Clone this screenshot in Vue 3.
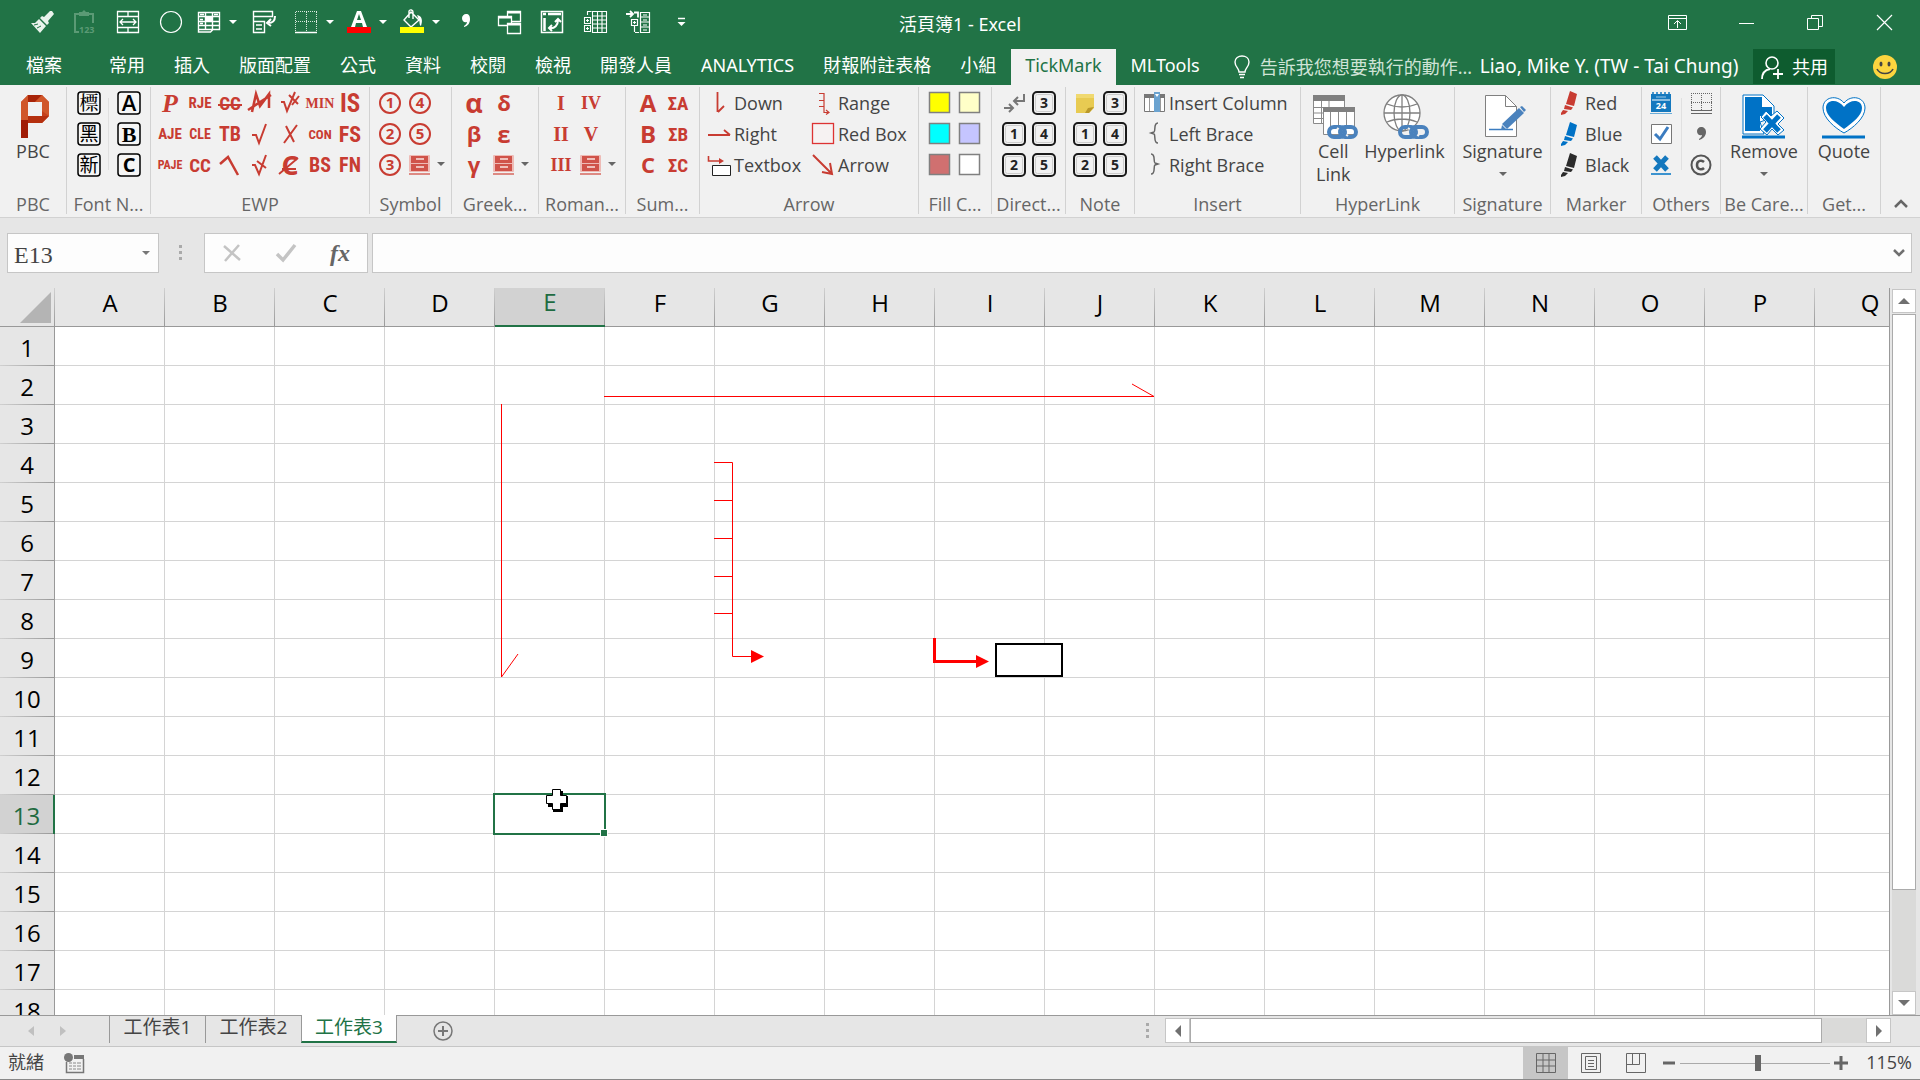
<script setup>
import { ref } from 'vue'

const RED = '#c83c32'
const BLUE = '#0072c6'
const NARROW = "'Liberation Sans Narrow','Roboto Condensed','DejaVu Sans Condensed',sans-serif"
const SANS = "'Open Sans','Noto Sans',sans-serif"
const SERIF = "'Liberation Serif',serif"

const glyph = (text, size, family = NARROW, extra = '', fill = RED) =>
  `<text x="12" y="${12 + Math.round(size * 0.36)}" text-anchor="middle" font-size="${size}" font-weight="700" font-family="${family}" fill="${fill}" ${extra}>${text}</text>`
const stroke = (d, width = 2, color = RED) =>
  `<path d="${d}" fill="none" stroke="${color}" stroke-width="${width}"/>`
const circled = (n) =>
  `<circle cx="12" cy="12" r="10" fill="none" stroke="${RED}" stroke-width="2"/>` + glyph(n, 15, SANS)
const boxed = (text, size, family, weight = 700) =>
  `<rect x="1" y="1" width="22" height="22" rx="3" fill="#f6f6f6" stroke="#000" stroke-width="1.5"/>` +
  glyph(text, size, family, '', '#000').replace('font-weight="700"', `font-weight="${weight}"`)
const keycap = (n) =>
  `<rect x="1" y="1" width="22" height="22" rx="4" fill="#f1f1f1" stroke="#1a1a1a" stroke-width="2"/><rect x="3.5" y="3.5" width="17" height="17" rx="2" fill="none" stroke="#ccc"/>` +
  glyph(n, 14, SANS, '', '#222')
const swatch = (color) =>
  `<rect x="1.5" y="1.5" width="20" height="20" fill="${color}" stroke="#808080" stroke-width="1.5"/>`
const marker = (color) =>
  `<path d="M12 0L19 3L16 15L8 13zM7 14L15 16.5L13 19L6 18zM5 19L10 20L7 23L3 24L3 22z" fill="${color}"/>`
const cabinet =
  `<rect x="1" y="2" width="21" height="17" rx="1" fill="#eebbb6"/><rect x="3" y="3" width="17" height="7" fill="#d0534a"/><rect x="3" y="11" width="17" height="7" fill="#d0534a"/><path d="M8 6h8M8 14h8" stroke="#efc0bb" stroke-width="2"/><path d="M1 21h21" stroke="#dd8a83" stroke-width="2"/>`
const chain =
  `<g fill="none" stroke="#4a82bd" stroke-width="4"><rect x="17" y="33" width="16" height="10" rx="5"/><rect x="28" y="33" width="16" height="10" rx="5"/></g><path d="M25 34l11 8" stroke="#f1f1f1" stroke-width="2"/><path d="M27 35l7 6" stroke="#4a82bd" stroke-width="3"/>`

const icons = {
  brush: '<path d="M22 1l2 3-6 7 1 2-2 2-7-7 2-2 2 1 6-6zM9 9l7 7-6 7-9-10 4 0z" fill="#e9f3ec"/><path d="M4 15l4-1M7 18l4-2" stroke="#217346"/>',
  paste: '<g fill="none" stroke="#5b9a75" stroke-width="2"><path d="M6 22H2V4h18v9"/></g><path d="M6 2h3l2-2 2 2h3v4H6z" fill="#5b9a75"/><text x="6" y="23" font-size="9" font-weight="700" font-family="Open Sans" fill="#5b9a75">123</text>',
  merge: '<path d="M1.5 1.5h21v21h-21zM1.500 6.500h21M1.500 17.500h21M12 1v5M12 18v5M4 12h16M7 9l-3 3 3 3M17 9l3 3-3 3" fill="none" stroke="#fff" stroke-width="1.3"/>',
  circle: '<circle cx="12" cy="12" r="10.5" fill="none" stroke="#fff" stroke-width="1.2"/>',
  table: '<path d="M1.500 2.500h21v17h-21zM1.500 6.500h21M1.500 11.500h21M1.500 15.500h21M8.500 2v17M15.500 2v17M3 4.500h4M17 4.500h4M3 9.500h3M3 13.500h3M1.500 19v3h12l3-3" fill="none" stroke="#fff" stroke-width="1.4"/><path d="M8 6h8v6H8z" fill="#fff"/>',
  form: '<path d="M1.500 1.500h19v5h-19zM1.500 11.500h11v11h-11zM1.500 6.500v5M4 15h6M4 19h6" fill="none" stroke="#fff" stroke-width="1.4"/><path d="M23 6c0 6-3 7-7 7M19 9l-4 4 4 3" fill="none" stroke="#fff" stroke-width="2"/>',
  borders: '<path d="M2 1.500h21M2 11.500h21M1.500 2v20M12.500 2v20M22.500 2v20" stroke="#d8e9de" stroke-dasharray="1 1"/><path d="M1 22.500h22" stroke="#fff" stroke-width="1.5"/>',
  fontColor: '<path fill-rule="evenodd" d="M10 1h4l6 16h-4l-1-4H9l-1 4H4zM10 10h4l-2-6z" fill="#fff"/><path d="M0 17h24v6H0z" fill="#f00"/>',
  fill: '<path d="M11 2l8 8-8 7-7-7zM9 8V1c1-2 4-1 4 1v7" fill="none" stroke="#fff" stroke-width="1.4"/><path d="M17 5c5 1 6 5 4 11-2-1-1-4-2-6z" fill="#fff"/><path d="M0 17h24v6H0z" fill="#ff0"/>',
  comma: '<path d="M12 4c3 0 4 2 4 5 0 4-2 7-6 8v-1c2-1 3-3 3-4-3 1-5-1-5-4 0-2 2-4 4-4z" fill="#fff"/>',
  windows: '<g fill="#217346" stroke="#fff" stroke-width="1.3"><path d="M10.500 1.500h13v10h-13z"/><path d="M1.500 6.500h13v9h-13z"/><path d="M10.500 13.500h13v10h-13z"/></g><path d="M10 2.500h14M1 7.500h14M10 14.500h14" stroke="#fff" stroke-width="2"/>',
  pivot: '<path d="M1.500 1.500h21v21h-21z" fill="none" stroke="#fff" stroke-width="1.5"/><path d="M3 4h3M8 4h13M4.500 8v13" stroke="#fff" stroke-width="2.5"/><path d="M9 18c6 1 9-3 9-8M15 12l3-3 3 3M12 15l-3 3 3 3" fill="none" stroke="#fff" stroke-width="2"/>',
  group1: '<path d="M9.500 1.500h14v21h-14zM14.500 1.500v21M19 1.500v21M9.500 6h14M9.500 10h14M9.500 14h14M9.500 18h14M1.500 7.500h6v6h-6zM1.500 15.500h6v6h-6zM4.500 5V1.500h4M3 10.500h3M4.500 9v3M3 18.500h3M4.500 17v3" fill="none" stroke="#fff" stroke-width="1.1"/>',
  group2: '<path d="M14.500 2.500h9v20h-9zM14.500 7h9M14.500 12h9M14.500 17h9M17 5h4M17 10h4M17 15h4M17 20h4M5.500 9.500h6v6h-6zM7 12.500h3M8.500 11v3M9 22.500h4M8.500 16v6" fill="none" stroke="#fff" stroke-width="1.2"/><path d="M0 4h6M4 1l3 3-3 3M8 2.500h4v5" fill="none" stroke="#fff" stroke-width="1.8"/>',
  more: '<path d="M9 8.500h7" stroke="#fff" stroke-width="1.5"/><path d="M8.500 12h8l-4 4z" fill="#fff"/>',
  ribbonOpts: '<path d="M3.500 5.500h18v14h-18zM3.500 8.500h18M12.500 18v-7M9 14l3.500-3.500 3.500 3.500" fill="none" stroke="#fff"/>',
  minimize: '<path d="M5 13.500h15" stroke="#fff"/>',
  restore: '<path d="M4.500 8.500h11v11h-11zM8.500 8V5.500h11v11H16" fill="none" stroke="#fff"/>',
  close: '<path d="M5 5l15 15M20 5L5 20" stroke="#fff" stroke-width="1.2"/>',
  bulb: '<path d="M9 17c0-4-4-5-4-10 0-8 14-8 14 0 0 5-4 6-4 10zM9 19.500h6M10 22.500h4" fill="none" stroke="#fff" stroke-width="1.4"/>',
  person: '<circle cx="12" cy="8" r="6" fill="none" stroke="#fff" stroke-width="1.6"/><path d="M2 24c0-6 3-9 8-10M18 14v10M13 19h10" fill="none" stroke="#fff" stroke-width="1.8"/>',
  smile: '<circle cx="12" cy="12" r="12" fill="#fcd53f"/><ellipse cx="8" cy="9" rx="1.5" ry="2.5" fill="#444"/><ellipse cx="16" cy="9" rx="1.5" ry="2.5" fill="#444"/><path d="M4 14c3 6 13 6 16 0" fill="none" stroke="#444" stroke-width="1.6"/>',

  fontBiao: boxed('標', 19, "'Noto Serif CJK TC','Noto Sans CJK TC',sans-serif", 500),
  fontHei: boxed('黑', 19, "'Noto Sans CJK TC',sans-serif", 400),
  fontXin: boxed('新', 19, "'Noto Sans CJK TC',sans-serif", 400),
  fontA: boxed('A', 22, SANS, 600),
  fontB: boxed('B', 22, SERIF),
  fontC: boxed('C', 20, SANS),

  p: glyph('P', 26, SERIF, 'font-style="italic"'),
  rje: glyph('RJE', 15),
  ccStrike: glyph('CC', 19) + stroke('M0 14h24'),
  mStrike: stroke('M4 21L8 3L12 15L21 3L21 17M0 19L23 4', 2.5),
  checkHash: stroke('M3 11h3l3 9L17 1M11 4l9 9M14 14l7-9'),
  min: glyph('MIN', 14, SERIF),
  is: glyph('IS', 25),
  aje: glyph('AJE', 15),
  cle: glyph('CLE', 14),
  tb: glyph('TB', 20),
  check: stroke('M4 13h4l3 8L18 2'),
  x: stroke('M8 4L16 20M19 3L6 21'),
  con: glyph('CON', 13),
  fs: glyph('FS', 22),
  paje: glyph('PAJE', 12),
  cc: glyph('CC', 19),
  hook: stroke('M2 11L10 4L20 22', 2.5),
  checkX: stroke('M4 12h3l4 9L18 2M9 8l9 7'),
  cSlash: glyph('C', 27, SANS) + stroke('M1 21L20 5M4 16h14', 1.8),
  bs: glyph('BS', 20),
  fn: glyph('FN', 20),

  c1: circled('1'), c2: circled('2'), c3: circled('3'), c4: circled('4'), c5: circled('5'),
  cabinet,
  alpha: glyph('α', 27, SANS), beta: glyph('β', 22, SANS), gamma: glyph('γ', 22, SANS),
  delta: glyph('δ', 22, SANS), epsilon: glyph('ε', 24, SANS),
  r1: glyph('I', 20, SERIF), r2: glyph('II', 20, SERIF), r3: glyph('III', 18, SERIF),
  r4: glyph('IV', 18, SERIF), r5: glyph('V', 20, SERIF),
  sA: glyph('A', 24, SANS), sB: glyph('B', 24, SANS), sC: glyph('C', 22, SANS),
  sumA: glyph('ΣA', 19), sumB: glyph('ΣB', 19), sumC: glyph('ΣC', 19),

  down: stroke('M10.500 1v20M11 21l6-6', 1.8),
  right: stroke('M1 13h22M23 13l-6-5', 1.8),
  textbox: stroke('M1.500 3v5h12', 1.6) + `<path d="M12 5l5 3-5 3z" fill="${RED}"/><path d="M5.500 12.500h18v10h-18z" fill="#fff" stroke="#222"/>`,
  range: stroke('M8 2.500h5v19h5M8 9.500h5M8 15.500h5M15 19l3 2.500-3 2', 1.2),
  redbox: '<rect x="1.5" y="1.5" width="21" height="20" fill="#f6f2f2" stroke="#d33" stroke-width="1.3"/>',
  arrow: stroke('M2 2l18 18M11 19l10 2-2-11', 2),

  yellow: swatch('#ff0'), cream: swatch('#ffffc8'), cyan: swatch('#0ff'),
  lilac: swatch('#c5c5ff'), rose: swatch('#d07070'), white: swatch('#fff'),
  arrows: stroke('M2 17h9M7 13l4 4-4 4M22 3v7h-9M16 6l-4 4 4 4', 2, '#777'),
  k1: keycap('1'), k2: keycap('2'), k3: keycap('3'), k4: keycap('4'), k5: keycap('5'),
  note: '<path d="M3 3h18v14l-5 5H3z" fill="#e8cb52"/><path d="M3 3h18v4H3z" fill="#f0d970"/><path d="M21 16l-6 1-3 5h4z" fill="#b9982a"/>',

  insertCol: '<path d="M2.500 3.500h20v17h-20z" fill="#fff" stroke="#777"/><path d="M2 3h21v4H2z" fill="#777"/><path d="M7.500 7v13M18.500 7v13" stroke="#999"/><path d="M12 1h6v20h-6z" fill="#6ba3d0"/><path d="M13 3h4l-2 3z" fill="#fff"/>',
  lbrace: stroke('M16 1c-5 0-2 8-4 9l-3 1 3 1c2 1-1 9 4 9', 1.5, '#666'),
  rbrace: stroke('M9 1c5 0 2 8 4 9l3 1-3 1c-2 1 1 9-4 9', 1.5, '#666'),

  mRed: marker('#c83c32'), mBlue: marker('#0072c6'), mBlack: marker('#2b2b2b'),
  calendar: '<path d="M2 3h20v18H2z" fill="#1478be"/><path d="M4 3V1M8 3V1M12 3V1M16 3V1M20 3V1" stroke="#1478be" stroke-width="1.5"/><path d="M3 9h18" stroke="#fff"/><path d="M7 6h10" stroke="#9cc8e6"/><text x="12" y="18" text-anchor="middle" font-size="9" font-weight="700" font-family="Open Sans" fill="#fff">24</text><path d="M1 22.500h22" stroke="#6badd9"/>',
  tick: '<path d="M2.500 2.500h20v19h-20z" fill="#fff" stroke="#777"/><path d="M6 12l5 5 8-12" fill="none" stroke="#3b7cc0" stroke-width="3"/>',
  cross: '<path d="M6 4l12 13M18 4L6 17" stroke="#1478be" stroke-width="5"/><path d="M2 21h20" stroke="#3c93cf" stroke-width="2"/>',
  grid: '<path d="M2.500 2v18M12.500 2v18M22.500 2v18M2 2.500h21M2 11.500h21" stroke="#666" stroke-dasharray="1 1"/><path d="M2 19.500h21M2 22.500h21" stroke="#666"/>',
  commaGray: '<path d="M12 5c3 0 5 2 5 5 0 4-3 7-7 8v-1c2-1 3-3 3-4-3 1-5-1-5-4 0-2 2-4 4-4z" fill="#666"/>',
  copyright: '<circle cx="12" cy="12" r="9.5" fill="none" stroke="#555" stroke-width="2"/><path d="M15 9c-2-2-7-2-7 3s5 5 7 3" fill="none" stroke="#555" stroke-width="2.5"/>',
}

const large = {
  pbc: '<path d="M18 1h14l7 7v14l-7 7H18v15H11V8z" fill="#c5401c"/><path d="M18 8h14v14H18z" fill="#f1f1f1"/><path d="M11 8l7-7v28h-7z" fill="#d0572a"/><path d="M18 1h14l-7 7H18z" fill="#a82408"/><path d="M32 1l7 7v14l-7-5V8h-7z" fill="#d0572a"/><path d="M11 26h7v18h-7z" fill="#a01c06"/><path d="M18 22h21l-7 7H18z" fill="#b5300f"/>',
  cell: '<g transform="translate(2 0)"><g fill="#fff" stroke="#8a8a8a"><path d="M1.500 2.500h31v27h-31zM1.500 13.500h31M1.500 19h31M1.500 24.500h31M9.500 6v24M17 6v24"/></g><path d="M1 1h32v6H1z" fill="#808080"/><path d="M11.500 14.500h31v26h-31zM18.500 18v20M26.500 18v16M34.500 18v16" fill="#fff" stroke="#8a8a8a"/><path d="M11 13h32v5H11z" fill="#808080"/>' + chain + '</g>',
  hyper: '<g transform="translate(2 0)"><g fill="#fff" stroke="#808080" stroke-width="1.3"><circle cx="19" cy="19" r="18"/><ellipse cx="19" cy="19" rx="8" ry="18"/><path d="M1 19h36M4 10c9 4 21 4 30 0M4 28c9-4 21-4 30 0M19 1v36" fill="none"/></g>' + chain + '</g>',
  sign: '<path d="M5.500 1.500h20l11 11v30h-31z" fill="#fff" stroke="#808080"/><path d="M25.500 1.500v11h11" fill="none" stroke="#808080"/><path d="M9 35.500h24" stroke="#3b7cc0" stroke-width="1.5"/><path d="M39 14l5 5-17 16-5-5z" fill="#4a82bd"/><path d="M40 13l2-1 4 4-2 2zM22 31l4 4-5 1z" fill="#4a82bd"/>',
  remove: `<path d="M2 1h20l11 11v11l-14 5 4 12H2z" fill="#fff" stroke="${BLUE}"/><path d="M4 3h17v10h10v9H19v15H4z" fill="${BLUE}"/><path d="M25 17l5 5 6-5 7 7-6 6 6 6-6 5-6-6-5 6-7-6 6-7-5-5z" fill="#fff" stroke="${BLUE}"/><path d="M24 22l14 15M38 22L24 37" stroke="${BLUE}" stroke-width="5"/><path d="M1 43h43" stroke="${BLUE}" stroke-width="3"/>`,
  quote: `<path d="M23 39C14 34 2 24 2 14 2 3 16 0 23 9 30 0 44 3 44 14c0 10-12 20-21 25z" fill="#fff" stroke="${BLUE}"/><path d="M23 35C15 29 5 22 5 14 5 6 16 4 23 13 30 4 41 6 41 14c0 8-10 15-18 21z" fill="${BLUE}"/><path d="M1 43h43" stroke="${BLUE}" stroke-width="3"/>`,
}

const qat = [
  { icon: 'brush', name: 'Format Painter' },
  { icon: 'paste', name: 'Paste Values' },
  { icon: 'merge', name: 'Merge' },
  { icon: 'circle', name: 'Oval' },
  { icon: 'table', name: 'Table', split: true, tight: true },
  { icon: 'form', name: 'Form' },
  { icon: 'borders', name: 'Borders', split: true },
  { icon: 'fontColor', name: 'Font Color', split: true },
  { icon: 'fill', name: 'Fill Color', split: true },
  { icon: 'comma', name: 'Comma Style' },
  { icon: 'windows', name: 'Switch Windows' },
  { icon: 'pivot', name: 'PivotTable' },
  { icon: 'group1', name: 'Group' },
  { icon: 'group2', name: 'Show Detail' },
  { icon: 'more', name: 'Customize' },
]
const windowButtons = [
  { icon: 'ribbonOpts', name: 'Ribbon Display Options' },
  { icon: 'minimize', name: 'Minimize' },
  { icon: 'restore', name: 'Restore' },
  { icon: 'close', name: 'Close' },
]
const tabs = ['常用', '插入', '版面配置', '公式', '資料', '校閱', '檢視', '開發人員', 'ANALYTICS', '財報附註表格', '小組', 'TickMark', 'MLTools']

const groups = [
  { label: 'PBC', w: 67, big: [{ icon: 'pbc', lines: ['PBC'] }] },
  { label: 'Font N...', w: 84, cols: 2, divided: true, icons: ['fontBiao', 'fontA', 'fontHei', 'fontB', 'fontXin', 'fontC'] },
  { label: 'EWP', w: 219, cols: 7, icons: ['p', 'rje', 'ccStrike', 'mStrike', 'checkHash', 'min', 'is', 'aje', 'cle', 'tb', 'check', 'x', 'con', 'fs', 'paje', 'cc', 'hook', 'checkX', 'cSlash', 'bs', 'fn'] },
  { label: 'Symbol', w: 82, cols: 2, menu: true, icons: ['c1', 'c4', 'c2', 'c5', 'c3', 'cabinet'] },
  { label: 'Greek...', w: 87, cols: 2, menu: true, icons: ['alpha', 'delta', 'beta', 'epsilon', 'gamma', 'cabinet'] },
  { label: 'Roman...', w: 87, cols: 2, menu: true, icons: ['r1', 'r4', 'r2', 'r5', 'r3', 'cabinet'] },
  { label: 'Sum...', w: 74, cols: 2, icons: ['sA', 'sumA', 'sB', 'sumB', 'sC', 'sumC'] },
  { label: 'Arrow', w: 219, rows: [['down', 'Down'], ['right', 'Right'], ['textbox', 'Textbox'], ['range', 'Range'], ['redbox', 'Red Box'], ['arrow', 'Arrow']] },
  { label: 'Fill C...', w: 73, cols: 2, icons: ['yellow', 'cream', 'cyan', 'lilac', 'rose', 'white'] },
  { label: 'Direct...', w: 74, cols: 2, icons: ['arrows', 'k3', 'k1', 'k4', 'k2', 'k5'] },
  { label: 'Note', w: 69, cols: 2, icons: ['note', 'k3', 'k1', 'k4', 'k2', 'k5'] },
  { label: 'Insert', w: 166, rows: [['insertCol', 'Insert Column'], ['lbrace', 'Left Brace'], ['rbrace', 'Right Brace']] },
  { label: 'HyperLink', w: 154, big: [{ icon: 'cell', lines: ['Cell', 'Link'] }, { icon: 'hyper', lines: ['Hyperlink'] }] },
  { label: 'Signature', w: 96, big: [{ icon: 'sign', lines: ['Signature'], menu: true }] },
  { label: 'Marker', w: 91, rows: [['mRed', 'Red'], ['mBlue', 'Blue'], ['mBlack', 'Black']] },
  { label: 'Others', w: 79, cols: 2, divided: true, icons: ['calendar', 'grid', 'tick', 'commaGray', 'cross', 'copyright'] },
  { label: 'Be Care...', w: 87, big: [{ icon: 'remove', lines: ['Remove'], menu: true }] },
  { label: 'Get...', w: 73, big: [{ icon: 'quote', lines: ['Quote'] }] },
]

const columns = 'ABCDEFGHIJKLMNOPQ'.split('')
const activeColumn = 'E'
const activeRow = 13
const sheets = ['工作表1', '工作表2', '工作表3']
const activeSheet = ref('工作表3')
const cellName = ref('E13')
const formula = ref('')
const zoom = ref(115)
</script>

<template>
  <div class="app">
    <header class="top">
      <div class="titlebar">
        <div class="qat">
          <button v-for="q in qat" :key="q.icon" :class="{ split: q.split, tight: q.tight }" :aria-label="q.name">
            <svg class="i24" viewBox="0 0 24 24" v-html="icons[q.icon]"></svg>
            <svg v-if="q.split" class="caret" viewBox="0 0 8 5"><path d="M0 0h8L4 4z" fill="#fff" /></svg>
          </button>
        </div>
        <h1>活頁簿1 - Excel</h1>
        <div class="winbtns">
          <button v-for="b in windowButtons" :key="b.icon" :aria-label="b.name">
            <svg class="i24" viewBox="0 0 24 24" v-html="icons[b.icon]"></svg>
          </button>
        </div>
      </div>
      <nav class="tabs">
        <button class="file">檔案</button>
        <button v-for="t in tabs" :key="t" :class="{ active: t === 'TickMark' }">{{ t }}</button>
        <label class="tell">
          <svg class="i24" viewBox="0 0 24 24" v-html="icons.bulb"></svg>
          <input type="text" placeholder="告訴我您想要執行的動作..." aria-label="告訴我您想要執行的動作" />
        </label>
        <span class="user">Liao, Mike Y. (TW - Tai Chung)</span>
        <button class="share"><svg class="i24" viewBox="0 0 24 24" v-html="icons.person"></svg>共用</button>
        <button class="smile" aria-label="Feedback"><svg class="i24" viewBox="0 0 24 24" v-html="icons.smile"></svg></button>
      </nav>
    </header>

    <section class="ribbon">
      <div v-for="g in groups" :key="g.label" class="group" :style="{ width: g.w + 'px' }">
        <div v-if="g.icons" class="icongrid" :class="{ divided: g.divided, seven: g.cols === 7, menu: g.menu }">
          <button v-for="(i, n) in g.icons" :key="n" :aria-label="i">
            <svg class="i24" viewBox="0 0 24 24" v-html="icons[i]"></svg>
          </button>
          <button v-if="g.menu" class="more" aria-label="More">
            <svg class="caret" viewBox="0 0 8 5"><path d="M0 0h8L4 4z" fill="#666" /></svg>
          </button>
        </div>
        <div v-else-if="g.rows" class="rowgrid">
          <button v-for="r in g.rows" :key="r[1]">
            <svg class="i24" viewBox="0 0 24 24" v-html="icons[r[0]]"></svg>{{ r[1] }}
          </button>
        </div>
        <div v-else class="bigs">
          <button v-for="b in g.big" :key="b.icon">
            <svg class="i46" viewBox="0 0 46 46" v-html="large[b.icon]"></svg>
            <span v-for="l in b.lines" :key="l">{{ l }}</span>
            <svg v-if="b.menu" class="caret drop" viewBox="0 0 8 5"><path d="M0 0h8L4 4z" fill="#666" /></svg>
          </button>
        </div>
        <div class="glabel">{{ g.label }}</div>
      </div>
      <button class="collapse" aria-label="Collapse the Ribbon">
        <svg viewBox="0 0 14 10"><path d="M1 8l6-6 6 6" fill="none" stroke="#666" stroke-width="2.5" /></svg>
      </button>
    </section>

    <section class="fbar">
      <div class="namebox">
        <input v-model="cellName" type="text" aria-label="Name Box" />
        <svg class="caret" viewBox="0 0 8 5"><path d="M0 0h8L4 4z" fill="#777" /></svg>
      </div>
      <svg class="dots" viewBox="0 0 3 16"><path d="M0 0h3v3H0zM0 6h3v3H0zM0 12h3v3H0z" fill="#aaa" /></svg>
      <div class="fxbox">
        <button aria-label="Cancel"><svg class="i24" viewBox="0 0 24 24"><path d="M4 5l16 14M19 4L5 20" stroke="#c4c4c4" stroke-width="2.5" /></svg></button>
        <button aria-label="Enter"><svg class="i24" viewBox="0 0 24 24"><path d="M3 13l6 6L21 4" fill="none" stroke="#c4c4c4" stroke-width="3.5" /></svg></button>
        <button class="fx" aria-label="Insert Function">fx</button>
      </div>
      <div class="formula">
        <input v-model="formula" type="text" aria-label="Formula Bar" />
        <svg class="chev" viewBox="0 0 12 8"><path d="M1 1l5 5 5-5" fill="none" stroke="#707070" stroke-width="2.5" /></svg>
      </div>
    </section>

    <main class="work">
      <div class="sheet">
        <table>
          <thead>
            <tr>
              <th class="corner"><svg viewBox="0 0 31 31"><path d="M31 0v31H0z" fill="#b4b4b4" /></svg></th>
              <th v-for="c in columns" :key="c" scope="col" :class="{ on: c === activeColumn }">{{ c }}</th>
            </tr>
          </thead>
          <tbody>
            <tr v-for="r in 18" :key="r">
              <th scope="row" :class="{ on: r === activeRow }">{{ r }}</th>
              <td v-for="c in columns" :key="c"></td>
            </tr>
          </tbody>
        </table>
        <svg class="shapes" width="1889" height="727" viewBox="0 288 1889 727">
          <g fill="none" stroke="#f00">
            <path d="M604 396.500H1154L1132 384" />
            <path d="M501.500 404V677L518 654" />
            <path d="M714 462.500h18.500V656.500H752M714 500.500h18M714 538.500h18M714 576.500h18M714 613.500h18" />
            <path d="M934.500 638v23.500H977" stroke-width="3" />
          </g>
          <path d="M751 650l13 6.500-13 6.500zM976 655l13 6.500-13 6.500z" fill="#f00" />
          <rect x="996" y="644" width="66" height="32" fill="#fff" stroke="#000" stroke-width="2" />
          <rect x="494" y="794" width="111" height="40" fill="none" stroke="#217346" stroke-width="2" />
          <rect x="600.5" y="829.5" width="7" height="7" fill="#217346" stroke="#fff" />
          <path d="M553 791h10v5h5v11h-5v5h-10v-5h-5v-11h5z" fill="#000" />
          <path d="M552.500 789.500h8v6h6v8h-6v6h-8v-6h-6v-8h6z" fill="#fff" stroke="#000" />
        </svg>
      </div>
      <div class="vscroll">
        <button aria-label="Scroll up"><svg viewBox="0 0 12 6"><path d="M6 0l6 6H0z" fill="#707070" /></svg></button>
        <div class="vthumb"></div>
        <div class="vtrack"></div>
        <button aria-label="Scroll down"><svg viewBox="0 0 12 6"><path d="M0 0h12L6 6z" fill="#707070" /></svg></button>
      </div>
    </main>

    <section class="sheetbar">
      <div class="sheetnav">
        <button aria-label="Previous sheet"><svg viewBox="0 0 6 10"><path d="M6 0v10L0 5z" fill="#c0c0c0" /></svg></button>
        <button aria-label="Next sheet"><svg viewBox="0 0 6 10"><path d="M0 0v10l6-5z" fill="#c0c0c0" /></svg></button>
      </div>
      <button v-for="s in sheets" :key="s" class="stab" :class="{ active: s === activeSheet }" @click="activeSheet = s">{{ s }}</button>
      <button class="add" aria-label="New sheet">
        <svg viewBox="0 0 20 20"><circle cx="10" cy="10" r="9" fill="none" stroke="#777" stroke-width="1.5" /><path d="M10 5v10M5 10h10" stroke="#777" stroke-width="2" /></svg>
      </button>
      <svg class="dots push" viewBox="0 0 3 16"><path d="M0 0h3v3H0zM0 6h3v3H0zM0 12h3v3H0z" fill="#aaa" /></svg>
      <div class="hscroll">
        <button aria-label="Scroll left"><svg viewBox="0 0 6 12"><path d="M6 0v12L0 6z" fill="#707070" /></svg></button>
        <div class="hthumb"></div>
        <div class="htrack"></div>
        <button aria-label="Scroll right"><svg viewBox="0 0 6 12"><path d="M0 0v12l6-6z" fill="#707070" /></svg></button>
      </div>
    </section>

    <footer class="status">
      <span>就緒</span>
      <svg class="macro" viewBox="0 0 20 20"><path d="M2.500 9v10.500h17V6" fill="none" stroke="#777" stroke-width="1.500" /><path d="M10 2h10v4H10z" fill="#777" /><circle cx="4.500" cy="4.500" r="4.500" fill="#777" /><path d="M5 10h3M9 10h3M13 10h4M5 13h3M9 13h3M13 13h4M5 16h3M9 16h3M13 16h4" stroke="#888" /></svg>
      <div class="views">
        <button class="on" aria-label="Normal"><svg viewBox="0 0 20 20"><path d="M.5.5h19v19H.5zM.5 7h19M.5 13h19M7 0v20M13 0v20" fill="none" stroke="#666" /></svg></button>
        <button aria-label="Page Layout"><svg viewBox="0 0 20 20"><path d="M.5.5h19v19H.5zM4.500 3.500h11v13h-11zM7 7.500h6M7 10.500h6M7 13.500h6" fill="none" stroke="#666" /></svg></button>
        <button aria-label="Page Break Preview"><svg viewBox="0 0 20 20"><path d="M.5.5h19v19H.5zM.5 11.500h13V.5M6.500.5v11" fill="none" stroke="#666" /></svg></button>
      </div>
      <button class="zbtn" aria-label="Zoom out"><svg viewBox="0 0 14 14"><path d="M1 7h12" stroke="#666" stroke-width="3" /></svg></button>
      <input v-model="zoom" class="slider" type="range" min="15" max="207" aria-label="Zoom" />
      <button class="zbtn" aria-label="Zoom in"><svg viewBox="0 0 14 14"><path d="M0 7h14M7 0v14" stroke="#666" stroke-width="3" /></svg></button>
      <span class="pct">{{ zoom }}%</span>
    </footer>
  </div>
</template>

<style>
body {
  margin: 0;
}
</style>

<style scoped>
.app {
  display: flex;
  flex-direction: column;
  height: 100vh;
  overflow: hidden;
  background: #e6e6e6;
  color: #444;
  font: 18px/24px 'Open Sans', 'Noto Sans CJK TC', sans-serif;
}
* {
  box-sizing: border-box;
}
button,
input {
  margin: 0;
  padding: 0;
  border: 0;
  background: none;
  color: inherit;
  font: inherit;
  outline: 0;
}
button {
  display: flex;
  align-items: center;
  justify-content: center;
  white-space: nowrap;
}
svg {
  display: block;
  flex: none;
  overflow: visible;
}
.i24 {
  width: 24px;
  height: 24px;
}
.i46 {
  width: 46px;
  height: 46px;
}
.caret {
  width: 8px;
  height: 5px;
}
.dots {
  width: 3px;
  height: 16px;
}

/* title bar and tabs */
.top {
  background: #217346;
  color: #fff;
  font-family: 'Noto Sans', 'Noto Sans CJK TC', sans-serif;
}
.titlebar {
  display: grid;
  grid-template-columns: 1fr auto 1fr;
  height: 49px;
}
.qat {
  display: flex;
  height: 44px;
  padding-left: 20px;
}
.qat button {
  width: 43px;
}
.qat .split {
  justify-content: flex-start;
  gap: 8px;
  width: 53px;
  padding-left: 9px;
}
.qat .tight {
  width: 50px;
  padding-left: 5px;
}
h1 {
  margin: 0;
  font-size: 18px;
  font-weight: 400;
  line-height: 48px;
}
.winbtns {
  display: flex;
  justify-content: flex-end;
  height: 44px;
  padding-right: 2px;
}
.winbtns button {
  width: 69px;
}
.tabs {
  display: flex;
  height: 36px;
}
.tabs > button {
  padding: 0 14px;
  margin-right: 1px;
  line-height: 32px;
  align-items: flex-start;
}
.tabs > .file {
  padding: 0 26px;
  margin-right: 7px;
}
.tabs > .active {
  background: #f1f1f1;
  color: #217346;
}
.tell {
  display: flex;
  align-items: center;
  gap: 6px;
  margin-left: 15px;
}
.tell input {
  width: 212px;
  height: 32px;
}
.tell input::placeholder {
  color: #cfe3d6;
  opacity: 1;
}
.user {
  flex: 1;
  padding-left: 8px;
  font-size: 19px;
  line-height: 34px;
  white-space: nowrap;
}
.tabs > .share {
  gap: 8px;
  align-items: center;
  width: 82px;
  height: 35px;
  margin-right: 38px;
  padding: 0;
  background: #0e5c2f;
}
.tabs > .smile {
  align-items: center;
  margin-right: 23px;
  padding: 0;
}

/* ribbon */
.ribbon {
  display: flex;
  height: 133px;
  padding: 2px 0 3px;
  border-bottom: 1px solid #d2d2d2;
  background: #f1f1f1;
}
.group {
  display: flex;
  flex: none;
  flex-direction: column;
  justify-content: space-between;
  border-right: 1px solid #d2d2d2;
}
.icongrid {
  display: grid;
  grid-template-columns: 30px 30px;
  grid-auto-rows: 31px;
  justify-content: center;
}
.icongrid.menu {
  grid-template-columns: 30px 30px 12px;
  grid-template-rows: repeat(3, 31px);
}
.icongrid.menu button:nth-child(odd) {
  grid-column: 1;
}
.icongrid.menu button.more {
  grid-area: 3 / 3;
}
.icongrid.seven {
  grid-template-columns: repeat(7, 30px);
}
.icongrid.divided {
  column-gap: 10px;
  background: linear-gradient(#e0e0e0, #e0e0e0) center / 1px 72px no-repeat;
}
.rowgrid {
  display: grid;
  grid-template-rows: repeat(3, 31px);
  grid-auto-flow: column;
  grid-auto-columns: 104px;
  padding-left: 7px;
}
.rowgrid button {
  justify-content: flex-start;
  gap: 3px;
}
.bigs {
  display: flex;
  align-items: flex-start;
  justify-content: center;
  gap: 8px;
  padding-top: 7px;
}
.bigs button {
  flex-direction: column;
  line-height: 23px;
}
.bigs .drop {
  margin-top: 9px;
}
.glabel {
  color: #666;
  line-height: 20px;
  text-align: center;
  white-space: nowrap;
}
.collapse {
  align-self: flex-end;
  width: 39px;
  height: 20px;
}
.collapse svg {
  width: 14px;
  height: 10px;
}

/* formula bar */
.fbar {
  display: flex;
  align-items: center;
  height: 70px;
  padding: 0 8px 0 7px;
}
.namebox,
.fxbox,
.formula {
  display: flex;
  align-items: center;
  height: 40px;
  border: 1px solid #c6c6c6;
  background: #fdfdfd;
}
.namebox {
  width: 152px;
  padding: 0 8px 0 6px;
}
.namebox input {
  flex: 1;
  min-width: 0;
  height: 36px;
  padding-top: 4px;
  font: 24px/32px 'Liberation Serif', serif;
}
.fbar .dots {
  margin: 0 22px 0 20px;
}
.fxbox {
  width: 164px;
  margin-right: 4px;
}
.fxbox button {
  flex: 1;
}
.fxbox .fx {
  color: #666;
  font: italic 700 24px/32px 'Liberation Serif', serif;
}
.formula {
  flex: 1;
  padding-right: 6px;
}
.formula input {
  flex: 1;
  height: 36px;
}
.chev {
  width: 12px;
  height: 8px;
}

/* worksheet */
.work {
  display: flex;
  flex: 1;
  min-height: 0;
}
.sheet {
  position: relative;
  flex: 1;
  min-width: 0;
  overflow: hidden;
  border-right: 1px solid #999;
}
.sheet table {
  width: 1925px;
  table-layout: fixed;
  border-spacing: 0;
  background: #fff;
}
.sheet th {
  height: 39px;
  padding: 0;
  color: #000;
  font: 24px/28px 'Open Sans', sans-serif;
}
.sheet td {
  padding: 0;
  border: solid #d4d4d4;
  border-width: 0 1px 1px 0;
}
.sheet thead th {
  width: 110px;
  padding-bottom: 9px;
  border-bottom: 1px solid #999;
  background: linear-gradient(#d0d0d0, #999) right / 1px 100% no-repeat #e6e6e6;
}
.sheet thead .corner {
  width: 55px;
  padding: 0;
}
.corner svg {
  width: 31px;
  height: 31px;
  margin-left: 20px;
}
.sheet tbody th {
  padding: 2px 0 0;
  border-right: 1px solid #999;
  background: linear-gradient(90deg, #d0d0d0, #999) bottom / 100% 1px no-repeat #e6e6e6;
}
.sheet thead .on {
  border-bottom: 2px solid #217346;
  background-color: #d2d2d2;
  color: #1e6b41;
}
.sheet tbody .on {
  border-right: 2px solid #217346;
  background-color: #d2d2d2;
  color: #1e6b41;
}
.shapes {
  position: absolute;
  top: 0;
  left: 0;
}
.vscroll {
  display: flex;
  flex-direction: column;
  width: 30px;
  padding: 1px 4px 0 2px;
}
.vscroll button {
  height: 24px;
  border: 1px solid #c6c6c6;
  background: #fff;
}
.vscroll svg {
  width: 12px;
  height: 6px;
}
.vthumb {
  flex: 577;
  margin-top: 1px;
  border: 1px solid #ababab;
  background: #fff;
}
.vtrack {
  flex: 101;
  background: #dadad9;
}

/* sheet tabs */
.sheetbar {
  display: flex;
  height: 32px;
  border-top: 1px solid #999;
  border-bottom: 1px solid #c6c6c6;
}
.sheetnav {
  display: flex;
  gap: 26px;
  width: 109px;
  padding-left: 28px;
}
.sheetnav svg {
  width: 6px;
  height: 10px;
}
.stab {
  width: 96px;
  height: 27px;
  padding-bottom: 6px;
  border-left: 1px solid #999;
  font-size: 19px;
}
.stab.active {
  margin-top: -1px;
  height: 28px;
  padding-bottom: 2px;
  border-right: 1px solid #999;
  border-bottom: 2px solid #217346;
  background: #fff;
  color: #217346;
}
.add {
  width: 92px;
}
.add svg {
  width: 20px;
  height: 20px;
}
.push {
  align-self: center;
  margin: 0 16px 0 auto;
}
.hscroll {
  display: flex;
  flex: 0 1 726px;
  height: 25px;
  margin: 2px 29px 0 0;
}
.hscroll button {
  width: 25px;
  border: 1px solid #c6c6c6;
  background: #fff;
}
.hscroll svg {
  width: 6px;
  height: 12px;
}
.hthumb {
  flex: 632;
  border: 1px solid #ababab;
  background: #fff;
}
.htrack {
  flex: 44;
  background: #dadad9;
}

/* status bar */
.status {
  display: flex;
  align-items: center;
  height: 33px;
  padding: 0 8px;
  border-bottom: 1px solid #888;
  background: #f1f1f1;
}
.status span {
  padding-bottom: 2px;
}
.macro {
  width: 20px;
  height: 20px;
  margin-left: 20px;
}
.views {
  display: flex;
  height: 32px;
  margin-left: auto;
}
.views button {
  width: 45px;
}
.views .on {
  background: #c6c6c6;
}
.views svg {
  width: 20px;
  height: 20px;
}
.zbtn svg {
  width: 14px;
  height: 14px;
}
.zbtn {
  width: 22px;
  height: 32px;
}
.slider {
  width: 150px;
  height: 16px;
  appearance: none;
  background: linear-gradient(#aaa, #aaa) center / 100% 1px no-repeat;
}
.slider::-webkit-slider-thumb {
  appearance: none;
  width: 6px;
  height: 16px;
  background: #666;
}
.pct {
  width: 60px;
  text-align: right;
}
</style>
